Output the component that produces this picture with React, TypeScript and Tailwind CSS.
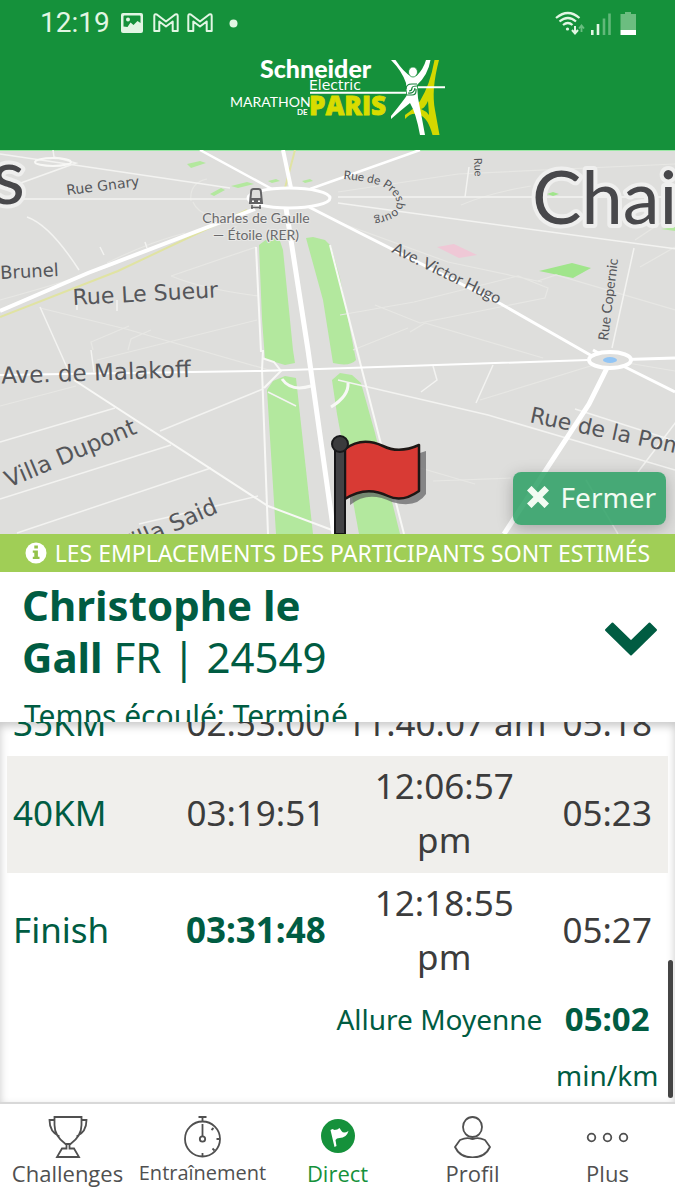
import type { ReactNode } from "react";

function StatusBar() {
  return (
    <div className="flex h-[46px] items-center justify-between pl-10 pr-[38px] text-[#e2f6e4]">
      <div className="flex items-center">
        <span className="w-[81px] font-['Roboto',sans-serif] text-[28px] leading-8">12:19</span>
        <svg width="120" height="22" viewBox="0 0 120 22" fill="none" aria-hidden="true">
          <rect x="0" y="1" width="22" height="20" rx="2" fill="currentColor" />
          <path d="M2.500 14.500V4.500a1 1 0 0 1 1-1h15a1 1 0 0 1 1 1v6.500l-3-2-4 4-3-2.500-3 4.500z" fill="#15913b" />
          <circle cx="7" cy="7.500" r="2" fill="currentColor" />
          <path
            d="M33.300 17V4q0-2.500 2.500-1.500l9.200 7 9.200-7Q56.700 1.500 56.700 4v15h-5V9.500l-6.700 5-6.700-5V19h-5z"
            stroke="currentColor"
            strokeWidth="2"
            strokeLinejoin="round"
          />
          <path
            d="M67.300 17V4q0-2.500 2.500-1.500l9.200 7 9.200-7Q90.700 1.500 90.700 4v15h-5V9.500l-6.700 5-6.700-5V19h-5z"
            stroke="currentColor"
            strokeWidth="2"
            strokeLinejoin="round"
          />
          <circle cx="112.500" cy="11.500" r="4" fill="currentColor" />
        </svg>
      </div>
      <svg width="82" height="25" viewBox="555 10 82 25" fill="none" aria-hidden="true">
        <g stroke="currentColor" strokeWidth="2.200">
          <path d="M556 17q12-10 23.500 0" />
          <path d="M559.500 20.500q8.500-7 16.500 0" />
          <path d="M563 24q5-4 9.500 0" />
        </g>
        <circle cx="567.500" cy="28" r="1.600" fill="currentColor" />
        <path d="M575 25v7M572 29l3 3.500 3-3.500" stroke="currentColor" strokeWidth="2" />
        <path d="M581.500 31v-6M579 27.500l2.500-3 2.500 3" stroke="#69bd80" strokeWidth="1.800" />
        <path d="M592.300 29v5M598 23v11" stroke="currentColor" strokeWidth="2.600" />
        <path d="M604 17.500V34M609.500 12.500V34" stroke="#62b87a" strokeWidth="2.600" />
        <path d="M625 11h6v2h5v16h-15.500V13h4.500z" fill="#6cbd80" />
        <path d="M620.500 29H636v5h-15.500z" fill="#ffffff" />
      </svg>
    </div>
  );
}

function Logo() {
  return (
    <svg width="216" height="78" viewBox="229 58 216 78" role="img" aria-label="Schneider Electric Marathon de Paris">
      <g fill="#ffffff" className="font-['Lato',sans-serif]">
        <text x="259" y="78" fontSize="25" fontWeight="900">Schneider</text>
        <text x="308" y="90" fontSize="14" className="font-['DejaVu_Sans',sans-serif]">Electric</text>
        <text x="229" y="107" fontSize="14">MARATHON</text>
        <text x="296" y="115" fontSize="8" fontWeight="700">DE</text>
      </g>
      <text x="308" y="115" fontSize="26" fontWeight="800" fill="#d8dc00" stroke="#d8dc00" strokeWidth="0.800" className="font-['Open_Sans',sans-serif]">
        PARIS
      </text>
      <path
        d="M433.500 60h4.500Q430 90 434 110l4.500 25h-7Q427 118 419 115q-8-4-15 4v-4q10-7 15-14Q429 85 433.500 60zM427 101q-3 7-7 8 5 2 8 6z"
        fill="#d4d800"
        fillRule="evenodd"
      />
      <path
        d="M390 60h4.500q8 12 15 16h6q7-7 9.500-16h4.500Q427 75 416 85l1 13q4 20 7 37h-5q-4-22-10-32-10 8-19 16v-3q13-16 16-21l-1-12Q401 71 390 60z"
        fill="#ffffff"
      />
      <ellipse cx="412" cy="72" rx="4.500" ry="5" fill="#ffffff" stroke="#15913b" strokeWidth="0.800" />
      <path d="M309 92.800h96M417 87.300h27" stroke="#ffffff" strokeWidth="2" />
      <path d="M405 89q0-5 6-5h5M406 95h5q4 0 4-4v-2M408 91q3 0 3-3 0-2 5-2M407 93q6 1 7-5" stroke="#15803a" strokeWidth="1.200" fill="none" />
    </svg>
  );
}

function MapView() {
  return (
    <svg className="block h-full w-full" viewBox="0 0 675 384" preserveAspectRatio="xMidYMid slice" role="img" aria-label="Plan de Paris">
      <defs>
        <path id="presbourg" d="M343 29Q366 31 382 36Q400 46 396 58Q388 68 352 70" />
      </defs>
      <rect width="675" height="384" fill="#dededc" />
      <path d="M0 0h675v1H0z" fill="#9be8a5" />

      <g fill="#b3e89e">
        <path d="M259 95l8-6 12-1 4 12 10 100 2 13-10 2-20-6-3-40z" />
        <path d="M267 240l6-9 12-5 11 2 17 156h-37z" />
        <path d="M306 88l7-1 12 3 6 6 9 32 16 82q-6 7-23 3l-10-63z" />
        <path d="M332 230l8-7 12 2 9 8 14 50 25 101h-41l-22-120z" />
        <path d="M187 14l13-3 6 2-15 5z" />
        <path d="M231 36l16-4 7 2-16 4zM210 44l11-6 4 2-11 6z" />
        <path d="M268 31l8-2 4 2-8 2zM302 31l8-2 3 2-8 2z" />
        <path d="M539 121l33-8 19 5-18 10zM547 44l6-2 6 2-6 2z" fill="#a0e58b" />
        <path d="M661 79l14-2v4z" />
      </g>
      <path d="M437 97l17-3 23 11-18 3z" fill="#efc8d6" />

      <g fill="none" stroke="#e7e7e4" strokeWidth="1.200">
        <path d="M191 51q-2-18 16-22M193 52q4 10 18 14M0 150q80-22 118-37M107 113q40-20 78-30M171 126l85-29M171 126q32 13 87 20M40 158l86 21 150 43M93 200l-2-8 38-16M128 200l3-11 20-9M97 210l160-40M0 256l76-20M338 42l120-18 217-10M338 72l110 40 94 20M376 305l99 29M375 155l45 18 125-25 3-10-30-12-104 26-74 13" />
        <path d="M425 173l118 35M353 200l55-22M425 173l-15 9M538 131l18-6 119 35M480 250l130-40M433 331l78-3" />
        <path d="M665 70l-30 20M461 55q28-12 70-19M640 117l35-20M610 210l65 11" />
      </g>
      <g fill="none" stroke="#f3f3f1" strokeWidth="1.500">
        <path d="M0 4l230 34M53 0l1 7 22 6-58 21M24 49h224M79 120Q50 75 27 67M40 157l29 65M91 200l3 22M0 292l115-34M0 349l171-54M17 383l194-65M139 374l119-28" />
        <path d="M160 281l103-42M77 145v15M117 150v11M100 97l4 8M145 92l2 6" />
        <path d="M338 47h337M465 47l4-30M676 99L338 53M634 98l-22 100" />
        <path d="M268 242l28 14M338 230l150 35 187 55M433 216l4 14-16 12M493 215l-17 38M575 259l100 32M676 272l-38 50M586 330l32 54" />
      </g>
      <g fill="none" stroke="#f8f8f6" strokeWidth="2">
        <path d="M74 230l194 126 64 24M263 200l-1 20 6 164M256 97l5 105M330 95l74 289M262 208l12 4 7 9-17 17" />
        <path d="M348 233q1 13-17 24M282 229q9 13 29 7" strokeWidth="3" />
        <ellipse cx="53" cy="12" rx="18" ry="4" />
      </g>
      <path d="M0 167l118-46 129-61M285 38l10-38" fill="none" stroke="#e0e3a2" strokeWidth="2" />
      <g fill="none" stroke="#ffffff">
        <path d="M0 161l88-38L255 59" strokeWidth="4" />
        <path d="M283 0l8 38" strokeWidth="4" />
        <path d="M286 58l22 142 26 184" strokeWidth="5" />
        <path d="M200 0l72 39M310 39L420 0" strokeWidth="2.500" />
        <path d="M309 57l51 26 141 71 105 60" strokeWidth="3" />
        <path d="M0 225l260-4 328-11" strokeWidth="2" />
        <path d="M611 210l-22 44-85 130" strokeWidth="5" />
        <path d="M611 210l64 32M593 200l18 10 64-2" strokeWidth="3" />
        <ellipse cx="289" cy="48" rx="41" ry="10" fill="#dededc" strokeWidth="3" />
        <ellipse cx="610" cy="210" rx="21" ry="8" fill="#dededc" strokeWidth="4" />
      </g>
      <ellipse cx="610" cy="210" rx="7" ry="3" fill="#92c5f5" />

      <g className="font-['Lato',sans-serif]" fill="#55565a">
        <g className="font-['DejaVu_Sans',sans-serif]">
          <text x="73" y="155" transform="rotate(-3 73 155)" fontSize="22">Rue Le Sueur</text>
          <text x="67" y="45" transform="rotate(-7 67 45)" fontSize="14">Rue Gnary</text>
          <text x="59" y="126" textAnchor="end" transform="rotate(-3 59 126)" fontSize="18">Brunel</text>
          <text x="191" y="227" textAnchor="end" transform="rotate(-2 191 227)" fontSize="23">Ave. de Malakoff</text>
          <text x="138" y="283" textAnchor="end" transform="rotate(-23 138 283)" fontSize="23">Villa Dupont</text>
          <text x="219" y="362" textAnchor="end" transform="rotate(-24 219 362)" fontSize="23">Villa Said</text>
          <text x="529" y="272" transform="rotate(12 529 272)" fontSize="22">Rue de la Pompe</text>
        </g>
        <text x="391" y="102" transform="rotate(26 391 102)" fontSize="16">Ave. Victor Hugo</text>
        <text x="608" y="191" transform="rotate(-83 608 191)" fontSize="14">Rue Copernic</text>
        <text x="474" y="8" transform="rotate(88 474 8)" fontSize="11">Rue</text>
        <text fontSize="12"><textPath href="#presbourg">Rue de Presbourg</textPath></text>
        <g textAnchor="middle" fontSize="14" stroke="#e8e8e6" strokeWidth="2" paintOrder="stroke" fill="#6a6a6c">
          <text x="256" y="73">Charles de Gaulle</text>
          <text x="256" y="90">— Étoile (RER)</text>
        </g>
        <g fill="#48484b" stroke="#efefee" strokeWidth="8" strokeLinejoin="round" paintOrder="stroke">
          <text x="25" y="54" textAnchor="end" fontSize="78">s</text>
          <text x="532" y="74" fontSize="74">Chai</text>
        </g>
      </g>
      <path d="M253.500 39h5q2 0 2.300 2l1.200 12h-12l1.200-12q.3-2 2.300-2z" fill="#dededc" stroke="#626264" strokeWidth="2" />
      <path d="M250 48h12v6h-12z" fill="#626264" />
      <path d="M252 50.500h2v1.500h-2zM258 50.500h2v1.500h-2z" fill="#ffffff" />
      <path d="M251 57.500h10M252 55v4M260 55v4" stroke="#626264" strokeWidth="1.500" />

      <path d="M350 307q12-12 30-5 22 8 46-1v43q-10 15-34 8-24-12-42 3z" fill="#555557" opacity=".65" />
      <path
        d="M345 299Q362 286 383 296Q399 304 419 295V341Q402 353 388 346Q366 335 345 349z"
        fill="#d83a34"
        stroke="#1d1715"
        strokeWidth="2.500"
        strokeLinejoin="round"
      />
      <path d="M335 295h10v89h-10z" fill="#424245" stroke="#151517" strokeWidth="2" />
      <circle cx="340" cy="294" r="8" fill="#3b3b3d" stroke="#19191b" strokeWidth="2" />
    </svg>
  );
}

type Split = { name: string; time: string; clock: string; meridiem: string; pace: string };

const splits: Split[] = [
  { name: "35KM", time: "02:53:00", clock: "11:40:07", meridiem: "am", pace: "05:18" },
  { name: "40KM", time: "03:19:51", clock: "12:06:57", meridiem: "pm", pace: "05:23" },
  { name: "Finish", time: "03:31:48", clock: "12:18:55", meridiem: "pm", pace: "05:27" },
];

function SplitTable() {
  return (
    <section className="relative flex min-h-0 flex-1 flex-col justify-end overflow-hidden px-[7px] shadow-[inset_0_4px_8px_#c8c8c8]">
      <table className="w-full shrink-0 table-fixed border-collapse text-[35px] leading-[54px] text-[#3c3c3c]">
        <colgroup>
          <col className="w-[24%]" />
          <col className="w-[27%]" />
          <col className="w-[30%]" />
          <col className="w-[19%]" />
        </colgroup>
        <tbody>
          {splits.map((s, i) => (
            <tr key={s.name} className={i === 1 ? "bg-[#f0efec]" : ""}>
              <th scope="row" className="px-1.5 pb-1.5 pt-[3px] text-left font-normal text-[#005c42]">{s.name}</th>
              <td className={i === 2 ? "pb-1.5 pl-0.5 pt-[3px] text-center font-bold text-[#005c42]" : "pb-1.5 pl-0.5 pt-[3px] text-center"}>{s.time}</td>
              <td className={i === 0 ? "whitespace-nowrap pb-1.5 pl-0.5 pt-[3px] text-center" : "pb-1.5 pl-0.5 pt-[3px] text-center"}>
                {s.clock}
                {i === 0 ? " " : <br />}
                {s.meridiem}
              </td>
              <td className="pb-1.5 pl-1 pt-[3px] text-center">{s.pace}</td>
            </tr>
          ))}
          <tr className="align-top text-[#005c42]">
            <th scope="row" colSpan={3} className="text-right text-[28px] font-normal leading-[58px]">Allure Moyenne</th>
            <td className="pl-1 text-center text-[28px]">
              <strong className="block text-[33px] leading-[58px]">05:02</strong>
              <span className="block leading-[54px]">min/km</span>
            </td>
          </tr>
        </tbody>
      </table>
      <div className="absolute bottom-1 right-0.5 h-[138px] w-[5px] rounded-full bg-[#444444]" />
    </section>
  );
}

function NavItem({ label, active, small, children }: { label: string; active?: boolean; small?: boolean; children: ReactNode }) {
  return (
    <a href="#" className={active ? "flex flex-col items-center text-[#15913b]" : "flex flex-col items-center text-[#505050]"}>
      <svg width="44" height="44" viewBox="0 0 44 44" fill="none" stroke="currentColor" strokeWidth="1.800" aria-hidden="true">
        {children}
      </svg>
      <span className={small ? "text-[20px] leading-[30px]" : "text-[22px] leading-[30px]"}>{label}</span>
    </a>
  );
}

function BottomNav() {
  return (
    <nav className="grid h-[98px] shrink-0 grid-cols-5 border-t-2 border-[#d8d8d8] bg-white pt-2.5 font-['Open_Sans',sans-serif]">
      <NavItem label="Challenges">
        <path d="M8.500 3h27v8q0 11-11 19h-5Q8.500 22 8.500 11zM8 6H3.500q0 12 10 16.500M36 6h4.500q0 12-10 16.500M20.500 30v4.500H16L11 43h22l-5-8.500h-4.500V30" />
      </NavItem>
      <NavItem label="Entraînement" small>
        <circle cx="21.500" cy="25" r="17.500" />
        <circle cx="21.500" cy="25" r="2.700" />
        <path d="M17.500 3h8M21.500 3v5M21.500 10v12M32.500 14l-2 2M35.500 25h3M31.500 34.500l2 2M21.500 39v3" />
      </NavItem>
      <NavItem label="Direct" active>
        <circle cx="22" cy="22" r="17" fill="currentColor" stroke="none" />
        <path d="M14.500 16l2-1 2 1q3 0 5-2l2 3q2 3 7 0-2 7-9 7-3 0-4 2l1 6-2 1z" fill="#ffffff" stroke="none" />
      </NavItem>
      <NavItem label="Profil">
        <ellipse cx="21.500" cy="13" rx="9.500" ry="10" />
        <path d="M9 26q6-2.500 10-1.500 2.500 1 5 0 4-1 10 1.500l5 7q-5 10.500-17.500 10.500T4 33z" strokeLinejoin="round" />
      </NavItem>
      <NavItem label="Plus">
        <circle cx="5.500" cy="23.500" r="3.800" />
        <circle cx="21.500" cy="23.500" r="3.800" />
        <circle cx="37.500" cy="23.500" r="3.800" />
      </NavItem>
    </nav>
  );
}

export default function App() {
  return (
    <div className="flex h-screen flex-col overflow-hidden bg-white font-['Noto_Sans',sans-serif]">
      <header className="flex h-[150px] shrink-0 flex-col bg-[#15913b]">
        <StatusBar />
        <div className="flex justify-center pt-3">
          <Logo />
        </div>
      </header>
      <main className="flex min-h-0 flex-1 flex-col">
        <div className="relative h-[384px] shrink-0 overflow-hidden">
          <MapView />
          <button
            type="button"
            className="absolute bottom-[9px] right-[9px] flex h-[53px] items-center gap-3 rounded-lg bg-[#2ba064]/85 pb-1 pl-3.5 pr-2.5 text-[28px] text-[#f2fbf2] shadow-[0_4px_16px_#00000040]"
          >
            <svg width="22" height="22" viewBox="0 0 22 22" aria-hidden="true">
              <path d="M4.500 4.500l13 13M17.500 4.500l-13 13" stroke="currentColor" strokeWidth="6.500" strokeLinecap="square" />
            </svg>
            Fermer
          </button>
        </div>
        <p className="flex h-[38px] shrink-0 items-center justify-center gap-2 whitespace-nowrap bg-[#a0ce56] text-[23px] text-white">
          <svg width="22" height="22" viewBox="0 0 22 22" aria-hidden="true">
            <circle cx="11" cy="11" r="10.500" fill="currentColor" />
            <path d="M9.300 3.500h3.600v3H9.300zM7.800 8.500h5.100v6.200h1.600V17H7.800v-2.300h1.500v-3.900H7.800z" fill="#94c24a" />
          </svg>
          LES EMPLACEMENTS DES PARTICIPANTS SONT ESTIMÉS
        </p>
        <section className="h-[150px] shrink-0 overflow-hidden pl-[22px] pr-[17px] pt-[7px] text-[#005c42]">
          <div className="flex items-center justify-between">
            <h1 className="max-w-[340px] text-[42px] font-normal leading-[52px]">
              <strong>Christophe le Gall</strong> FR | 24549
            </h1>
            <button type="button" aria-label="Réduire" className="pt-4">
              <svg className="block" width="54" height="36" viewBox="0 0 54 36" aria-hidden="true">
                <path
                  d="M2 9L8.500 2.500 27 20.500 45.500 2.500 52 9 27 33.500z"
                  fill="currentColor"
                  stroke="currentColor"
                  strokeWidth="2"
                  strokeLinejoin="round"
                />
              </svg>
            </button>
          </div>
          <p className="pl-0.5 pt-[11px] text-[30px] leading-[44px]">Temps écoulé: Terminé</p>
        </section>
        <SplitTable />
      </main>
      <BottomNav />
    </div>
  );
}
